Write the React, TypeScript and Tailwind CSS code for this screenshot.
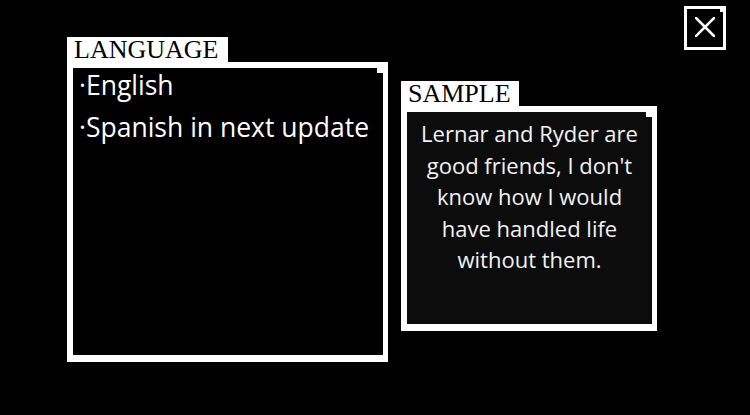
import React from "react";

const body = "font-['Segoe_UI','Open_Sans','Noto_Sans',sans-serif]";
const serif = "font-['Liberation_Serif','Times_New_Roman',serif]";

function Notch({ className }: { className: string }) {
  return <span className={`absolute right-0 top-0 bg-white ${className}`} />;
}

function Panel({
  label,
  labelWidth,
  className,
  boxClass,
  children,
}: {
  label: string;
  labelWidth: string;
  className: string;
  boxClass: string;
  children: React.ReactNode;
}) {
  return (
    <section className={`flex flex-col ${className}`}>
      <div className={`flex h-[25px] items-center bg-white pl-[7px] text-[26px] leading-none text-black ${serif} ${labelWidth}`}>
        {label}
      </div>
      <div className={`relative border-white border-l-[6px] border-t-[6px] border-r-[5px] border-b-[7px] ${boxClass}`}>
        <Notch className="h-[5px] w-[6px]" />
        {children}
      </div>
    </section>
  );
}

export default function App() {
  return (
    <div className={`h-[415px] w-[750px] overflow-hidden bg-black ${body}`}>
      <div className="flex items-start pl-[67px] pt-[6px]">
        <Panel label="LANGUAGE" labelWidth="w-[161px]" className="mt-[31px] w-[321px]" boxClass="h-[300px] bg-black">
          <ul className="flex flex-col gap-[8px] pl-[6px] text-[26.5px] leading-[34px] text-white">
            <li>·English</li>
            <li>·Spanish in next update</li>
          </ul>
        </Panel>

        <Panel label="SAMPLE" labelWidth="w-[118px]" className="ml-[13px] mt-[75px] w-[256px]" boxClass="h-[225px] bg-[#0c0c0c] border-b-[6px]">
          <p className="px-[8px] pt-[6px] text-center text-[22px] leading-[31.5px] text-[#f2f2f2]">
            Lernar and Ryder are good friends, I don't know how I would have handled life without them.
          </p>
        </Panel>

        <button className="relative ml-[27px] flex h-[44px] w-[42px] items-center justify-center border-[3px] border-white bg-black">
          <span className="absolute right-0 top-0 h-[3px] w-[3px] bg-white" />
          <svg width="20" height="20" viewBox="0 0 20 20" className="mt-[-2px]">
            <path d="M1 1 L19 19 M19 1 L1 19" stroke="white" strokeWidth="2.5" strokeLinecap="square" />
          </svg>
        </button>
      </div>
    </div>
  );
}
